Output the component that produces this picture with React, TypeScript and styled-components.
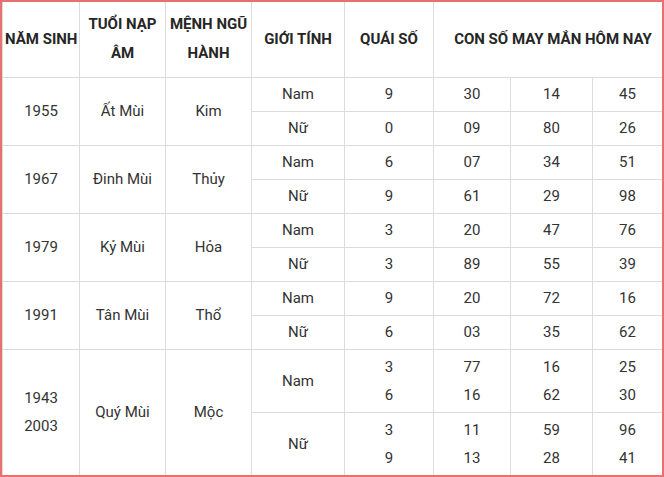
import styled, { createGlobalStyle } from "styled-components";

const GlobalStyle = createGlobalStyle`
  html, body {
    margin: 0;
    padding: 0;
    background: #fff;
  }
  body {
    font-family: Roboto, "Noto Sans", "Liberation Sans", sans-serif;
  }
`;

const Frame = styled.div`
  width: 664px;
  height: 477px;
  box-sizing: border-box;
  border: 2px solid #e87070;
  overflow: hidden;
`;

const Table = styled.table`
  width: 660px;
  border-collapse: collapse;
  table-layout: fixed;
  color: #333;
  font-size: 15px;
`;

const HeadRow = styled.tr`
  height: 75px;
`;

const Row = styled.tr<{ $h: number }>`
  height: ${({ $h }) => $h}px;
`;

const Th = styled.th<{ $nowrap?: boolean; $shift?: number }>`
  border: 1px solid #dcdcdc;
  border-top: none;
  font-weight: 700;
  color: #262626;
  line-height: 29px;
  padding: 0 2px 0 ${({ $shift }) => 2 + ($shift ?? 0)}px;
  text-align: center;
  vertical-align: middle;
  white-space: ${({ $nowrap }) => ($nowrap ? "nowrap" : "normal")};
  overflow: visible;
`;

const Td = styled.td`
  border: 1px solid #dcdcdc;
  padding: 0;
  text-align: center;
  vertical-align: middle;
  line-height: 28px;
`;

type Group = {
  years: string[];
  tuoi: string;
  menh: string;
  rows: { gender: string; quai: string[]; nums: string[][] }[];
};

const groups: Group[] = [
  {
    years: ["1955"],
    tuoi: "Ất Mùi",
    menh: "Kim",
    rows: [
      { gender: "Nam", quai: ["9"], nums: [["30", "14", "45"]] },
      { gender: "Nữ", quai: ["0"], nums: [["09", "80", "26"]] },
    ],
  },
  {
    years: ["1967"],
    tuoi: "Đinh Mùi",
    menh: "Thủy",
    rows: [
      { gender: "Nam", quai: ["6"], nums: [["07", "34", "51"]] },
      { gender: "Nữ", quai: ["9"], nums: [["61", "29", "98"]] },
    ],
  },
  {
    years: ["1979"],
    tuoi: "Kỷ Mùi",
    menh: "Hỏa",
    rows: [
      { gender: "Nam", quai: ["3"], nums: [["20", "47", "76"]] },
      { gender: "Nữ", quai: ["3"], nums: [["89", "55", "39"]] },
    ],
  },
  {
    years: ["1991"],
    tuoi: "Tân Mùi",
    menh: "Thổ",
    rows: [
      { gender: "Nam", quai: ["9"], nums: [["20", "72", "16"]] },
      { gender: "Nữ", quai: ["6"], nums: [["03", "35", "62"]] },
    ],
  },
  {
    years: ["1943", "2003"],
    tuoi: "Quý Mùi",
    menh: "Mộc",
    rows: [
      {
        gender: "Nam",
        quai: ["3", "6"],
        nums: [
          ["77", "16", "25"],
          ["16", "62", "30"],
        ],
      },
      {
        gender: "Nữ",
        quai: ["3", "9"],
        nums: [
          ["11", "59", "96"],
          ["13", "28", "41"],
        ],
      },
    ],
  },
];

const Lines = ({ items }: { items: string[] }) => (
  <>
    {items.map((t, i) => (
      <div key={i}>{t}</div>
    ))}
  </>
);

export default function App() {
  return (
    <>
      <GlobalStyle />
      <Frame>
        <Table>
          <colgroup>
            <col style={{ width: 77 }} />
            <col style={{ width: 86 }} />
            <col style={{ width: 86 }} />
            <col style={{ width: 93 }} />
            <col style={{ width: 89 }} />
            <col style={{ width: 77 }} />
            <col style={{ width: 82 }} />
            <col style={{ width: 70 }} />
          </colgroup>
          <tbody>
            <HeadRow>
              <Th $nowrap>NĂM SINH</Th>
              <Th>TUỔI NẠP ÂM</Th>
              <Th>MỆNH NGŨ HÀNH</Th>
              <Th>GIỚI TÍNH</Th>
              <Th>QUÁI SỐ</Th>
              <Th colSpan={3} $shift={10}>
                CON SỐ MAY MẮN HÔM NAY
              </Th>
            </HeadRow>
            {groups.map((g) =>
              g.rows.map((r, ri) => {
                const h = r.quai.length > 1 ? 63 : 34;
                return (
                  <Row key={g.tuoi + ri} $h={h}>
                    {ri === 0 && (
                      <>
                        <Td rowSpan={g.rows.length}>
                          <Lines items={g.years} />
                        </Td>
                        <Td rowSpan={g.rows.length}>{g.tuoi}</Td>
                        <Td rowSpan={g.rows.length}>{g.menh}</Td>
                      </>
                    )}
                    <Td>{r.gender}</Td>
                    <Td>
                      <Lines items={r.quai} />
                    </Td>
                    {[0, 1, 2].map((c) => (
                      <Td key={c}>
                        <Lines items={r.nums.map((n) => n[c])} />
                      </Td>
                    ))}
                  </Row>
                );
              })
            )}
          </tbody>
        </Table>
      </Frame>
    </>
  );
}
